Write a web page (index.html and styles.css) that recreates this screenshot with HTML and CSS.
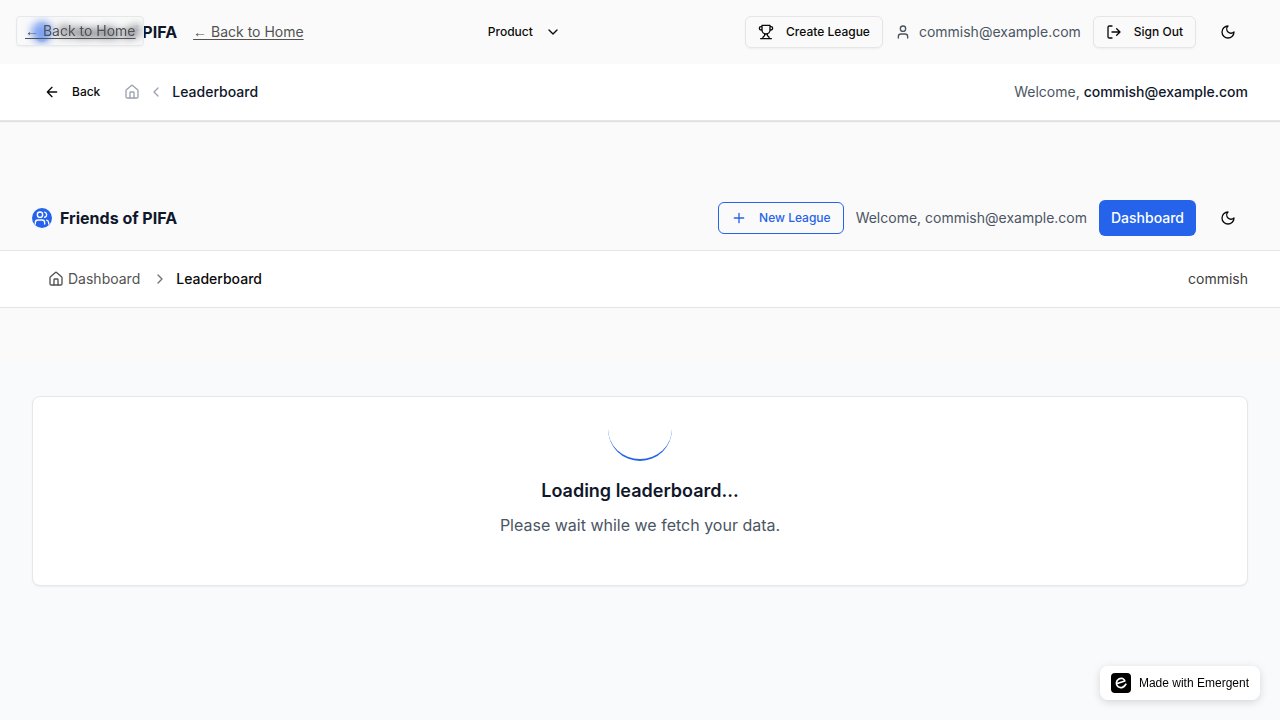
FILE: index.html
```html
<!DOCTYPE html>
<html lang="en">
<head>
<meta charset="utf-8">
<meta name="viewport" content="width=device-width, initial-scale=1">
<title>Leaderboard - Friends of PIFA</title>
<link rel="stylesheet" href="styles.css">
</head>
<body>
<svg class="sprite" aria-hidden="true">
  <symbol id="users" viewBox="0 0 24 24"><path d="M16 21v-2a4 4 0 0 0-4-4H6a4 4 0 0 0-4 4v2"/><circle cx="9" cy="7" r="4"/><path d="M22 21v-2a4 4 0 0 0-3-3.870M16 3.130a4 4 0 0 1 0 7.750"/></symbol>
  <symbol id="trophy" viewBox="0 0 24 24"><path d="M6 9H4.500a2.500 2.500 0 0 1 0-5H6M18 9h1.500a2.500 2.500 0 0 0 0-5H18M4 22h16M10 14.660V17c0 .550-.470.980-.970 1.210C7.850 18.750 7 20.240 7 22M14 14.660V17c0 .550.470.980.970 1.210C16.150 18.750 17 20.240 17 22M18 2H6v7a6 6 0 0 0 12 0V2Z"/></symbol>
  <symbol id="user" viewBox="0 0 24 24"><path d="M19 21v-2a4 4 0 0 0-4-4H9a4 4 0 0 0-4 4v2"/><circle cx="12" cy="7" r="4"/></symbol>
  <symbol id="logout" viewBox="0 0 24 24"><path d="M9 21H5a2 2 0 0 1-2-2V5a2 2 0 0 1 2-2h4M16 17l5-5-5-5M21 12H9"/></symbol>
  <symbol id="moon" viewBox="0 0 24 24"><path d="M12 3a6 6 0 0 0 9 9 9 9 0 1 1-9-9Z"/></symbol>
  <symbol id="arrow-left" viewBox="0 0 24 24"><path d="m12 19-7-7 7-7M19 12H5"/></symbol>
  <symbol id="house" viewBox="0 0 24 24"><path d="M15 21v-8a1 1 0 0 0-1-1h-4a1 1 0 0 0-1 1v8"/><path d="M3 10a2 2 0 0 1 .709-1.528l7-6a2 2 0 0 1 2.582 0l7 6A2 2 0 0 1 21 10v9a2 2 0 0 1-2 2H5a2 2 0 0 1-2-2z"/></symbol>
  <symbol id="chevron-left" viewBox="0 0 24 24"><path d="m15 18-6-6 6-6"/></symbol>
  <symbol id="chevron-right" viewBox="0 0 24 24"><path d="m9 18 6-6-6-6"/></symbol>
  <symbol id="chevron-down" viewBox="0 0 24 24"><path d="m6 9 6 6 6-6"/></symbol>
  <symbol id="plus" viewBox="0 0 24 24"><path d="M5 12h14M12 5v14"/></symbol>
</svg>

<a class="skip-link" href="#main"><span class="arrow">← </span>Back to Home</a>

<header class="navbar">
  <div class="nav-start">
    <a class="brand" href="#"><span class="brand-mark"><svg class="icon"><use href="#users"/></svg></span>Friends of PIFA</a>
    <a class="home-link" href="#"><span class="arrow">← </span>Back to Home</a>
  </div>
  <button class="btn product" type="button">Product<svg class="icon"><use href="#chevron-down"/></svg></button>
  <div class="nav-end">
    <button class="btn outline" type="button"><svg class="icon"><use href="#trophy"/></svg>Create League</button>
    <span class="account"><svg class="icon"><use href="#user"/></svg>commish@example.com</span>
    <button class="btn outline" type="button"><svg class="icon"><use href="#logout"/></svg>Sign Out</button>
    <button class="btn theme" type="button" aria-label="Toggle theme"><svg class="icon"><use href="#moon"/></svg></button>
  </div>
</header>

<div class="subbar">
  <nav class="crumbs" aria-label="Page">
    <button class="btn back" type="button"><svg class="icon"><use href="#arrow-left"/></svg>Back</button>
    <a class="crumb-home" href="#" aria-label="Home"><svg class="icon"><use href="#house"/></svg></a>
    <svg class="icon faint"><use href="#chevron-left"/></svg>
    <span class="current">Leaderboard</span>
  </nav>
  <p class="welcome">Welcome, <strong>commish@example.com</strong></p>
</div>

<header class="navbar league-nav">
  <a class="brand" href="#"><span class="brand-mark"><svg class="icon"><use href="#users"/></svg></span>Friends of PIFA</a>
  <div class="nav-end">
    <button class="btn outline accent" type="button"><svg class="icon"><use href="#plus"/></svg>New League</button>
    <span class="account">Welcome, commish@example.com</span>
    <a class="dashboard" href="#">Dashboard</a>
    <button class="btn theme" type="button" aria-label="Toggle theme"><svg class="icon"><use href="#moon"/></svg></button>
  </div>
</header>

<div class="subbar trail">
  <nav class="trail-links" aria-label="Breadcrumb">
    <a class="trail-link" href="#"><svg class="icon"><use href="#house"/></svg>Dashboard</a>
    <svg class="icon trail-sep"><use href="#chevron-right"/></svg>
    <span class="trail-current">Leaderboard</span>
  </nav>
  <span class="username">commish</span>
</div>

<main class="page" id="main">
  <section class="card" role="status">
    <div class="spinner"></div>
    <h1>Loading leaderboard...</h1>
    <p>Please wait while we fetch your data.</p>
  </section>
</main>

<a class="badge" href="#">
  <svg class="badge-logo" viewBox="0 0 20 20" aria-hidden="true"><rect width="20" height="20" rx="4" fill="#000"/><path d="M5.500 10.800 13.800 8C13.200 5.500 10.300 4.600 7.900 6 4.900 7.700 4.600 11.800 7 13.700c2.600 2 6.500.7 8.200-3" fill="none" stroke="#fff" stroke-width="1.700" stroke-linejoin="round"/></svg>
  Made with Emergent
</a>
</body>
</html>
```
FILE: styles.css
```css
* { box-sizing: border-box; }
body {
  margin: 0;
  min-height: 100vh;
  display: flex;
  flex-direction: column;
  background: #fafafa;
  color: #0f172a;
  font: 14px/20px Inter, "Liberation Sans", sans-serif;
}
a { color: inherit; text-decoration: none; }
h1, p { margin: 0; }
.sprite { position: absolute; width: 0; height: 0; }
.icon {
  width: 16px;
  height: 16px;
  flex: none;
  fill: none;
  stroke: currentColor;
  stroke-width: 2;
  stroke-linecap: round;
  stroke-linejoin: round;
}
.skip-link {
  position: absolute;
  z-index: 2;
  top: 16px;
  left: 16px;
  padding: 4px 7px 4px 8px;
  border: 1px solid #e5e7eb;
  border-radius: 4px;
  background: rgba(250, 250, 250, 0.1);
  backdrop-filter: blur(4px);
  box-shadow: 0 1px 2px rgba(0, 0, 0, 0.05);
  color: #525252;
  text-decoration: underline;
  text-underline-offset: 2px;
}
.arrow { font-family: "Liberation Sans", sans-serif; }
.navbar {
  display: flex;
  justify-content: space-between;
  align-items: center;
  height: 64px;
  padding: 0 32px;
}
.nav-start, .nav-end { display: flex; align-items: center; }
.nav-start { gap: 16px; }
.nav-end { justify-content: flex-end; gap: 12px; }
.brand {
  display: flex;
  align-items: center;
  gap: 8px;
  font-size: 16px;
  line-height: 24px;
  font-weight: 700;
  white-space: nowrap;
}
.brand-mark {
  display: grid;
  place-items: center;
  width: 20px;
  height: 20px;
  border-radius: 50%;
  background: #2563eb;
  color: #fff;
}
.home-link { color: #525252; text-decoration: underline; text-underline-offset: 2px; }
.btn {
  display: inline-flex;
  align-items: center;
  gap: 12px;
  height: 32px;
  padding: 0 12px;
  border: 0;
  border-radius: 6px;
  background: none;
  color: #0a0a0a;
  font: 500 12px/16px Inter, "Liberation Sans", sans-serif;
  white-space: nowrap;
}
.outline { border: 1px solid #e5e5e5; box-shadow: 0 1px 2px rgba(0, 0, 0, 0.05); }
.accent { border-color: #2563eb; color: #2563eb; box-shadow: none; }
.theme { width: 40px; }
.account { display: flex; align-items: center; gap: 8px; color: #4b5563; }
.subbar {
  display: flex;
  align-items: center;
  justify-content: space-between;
  min-height: 57px;
  padding: 0 32px;
  border-bottom: 1px solid #e5e5e5;
  background: #fff;
  box-shadow: 0 1px 1px rgba(0, 0, 0, 0.1);
}
.crumbs { display: flex; align-items: center; gap: 8px; }
.back { margin-right: 4px; }
.crumb-home { display: flex; color: #9ca3af; }
.faint { color: #9ca3af; }
.current { font-weight: 500; }
.welcome { color: #4b5563; }
.welcome strong { color: #0f172a; font-weight: 500; }
.league-nav { margin-top: 65px; }
.dashboard {
  padding: 8px 12px;
  border-radius: 6px;
  background: #2563eb;
  color: #fff;
  font-weight: 500;
}
.trail {
  min-height: 58px;
  border-top: 1px solid #e5e5e5;
  box-shadow: 0 1px 2px rgba(0, 0, 0, 0.05);
}
.trail-links { display: flex; align-items: center; gap: 8px; padding-left: 16px; color: #525252; }
.trail-link { display: flex; align-items: center; gap: 4px; padding-right: 4px; }
.trail-sep { color: #737373; }
.trail-current { color: #0a0a0a; font-weight: 500; }
.username { color: #404040; }
.page {
  flex: 1;
  padding: 88px 32px 0;
  background: linear-gradient(#fafafa 56px, #f9fafc 56px);
}
.card {
  display: flex;
  flex-direction: column;
  align-items: center;
  padding-bottom: 48px;
  border: 1px solid #e5e7eb;
  border-radius: 8px;
  background: #fff;
  box-shadow: 0 1px 2px rgba(0, 0, 0, 0.05);
  text-align: center;
}
.spinner {
  width: 64px;
  height: 64px;
  margin-bottom: 16px;
  border-bottom: 2px solid #2563eb;
  border-radius: 50%;
}
.card h1 { margin-bottom: 8px; font-size: 18px; line-height: 28px; font-weight: 600; }
.card p { color: #4b5563; font-size: 16px; line-height: 24px; }
.badge {
  position: fixed;
  right: 20px;
  bottom: 20px;
  display: flex;
  align-items: center;
  gap: 8px;
  padding: 7px 11px;
  border-radius: 8px;
  background: #fff;
  box-shadow: 0 2px 8px rgba(0, 0, 0, 0.15);
  color: #000;
  font: 12px/20px "Liberation Sans", Arial, sans-serif;
}
.badge-logo { width: 20px; height: 20px; }
```
